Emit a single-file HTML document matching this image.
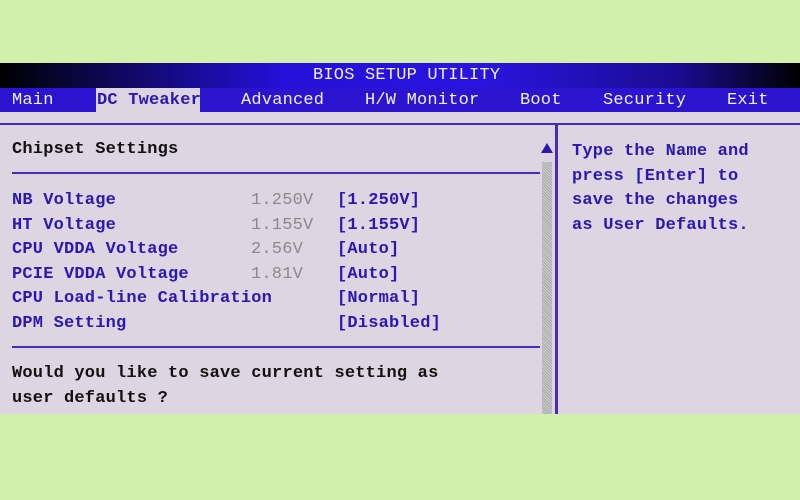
<!DOCTYPE html><html><head><style>
body{margin:0;width:800px;height:500px;background:#d3f0aa;position:relative;overflow:hidden;font-family:"Liberation Mono",monospace;}
.t{position:absolute;font-size:17px;letter-spacing:0.2px;white-space:pre;line-height:20px}
.b{color:#2a18b0;font-weight:bold}
.k{color:#111;font-weight:bold}
.g{color:#8a8a8a}
.w{color:#f0f0ff}
</style></head><body>
<div style="position:absolute;left:0;top:63px;width:800px;height:25px;background:linear-gradient(90deg,#000 0%,#0a0640 10%,#2410d8 35%,#2a14e0 60%,#1a0c90 85%,#000 100%)"></div>
<div class="t w" style="left:313px;top:66px">BIOS SETUP UTILITY</div>
<div style="position:absolute;left:0;top:88px;width:800px;height:24px;background:#2a14d0"></div>
<div style="position:absolute;left:96px;top:88px;width:104px;height:24px;background:#dcd4e0"></div>
<div class="t w" style="left:12px;top:91px">Main</div>
<div class="t b" style="left:97px;top:91px">DC Tweaker</div>
<div class="t w" style="left:241px;top:91px">Advanced</div>
<div class="t w" style="left:365px;top:91px">H/W Monitor</div>
<div class="t w" style="left:520px;top:91px">Boot</div>
<div class="t w" style="left:603px;top:91px">Security</div>
<div class="t w" style="left:727px;top:91px">Exit</div>
<div style="position:absolute;left:0;top:112px;width:800px;height:302px;background:#ddd5e1"></div>
<div style="position:absolute;left:0;top:123px;width:800px;height:2px;background:#4a2ab8"></div>
<div style="position:absolute;left:555px;top:124px;width:3px;height:290px;background:#4a2ab8"></div>
<div style="position:absolute;left:12px;top:172px;width:528px;height:2px;background:#4a2ab8"></div>
<div style="position:absolute;left:12px;top:346px;width:528px;height:2px;background:#4a2ab8"></div>
<div style="position:absolute;left:542px;top:162px;width:10px;height:252px;background:repeating-linear-gradient(45deg,#aaa 0 1px,#ccc 1px 2px)"></div>
<div style="position:absolute;left:541px;top:143px;width:0;height:0;border-left:6px solid transparent;border-right:6px solid transparent;border-bottom:10px solid #2a18b0"></div>
<div class="t k" style="left:12px;top:140px">Chipset Settings</div>
<div class="t b" style="left:12px;top:189px;line-height:24.6px">NB Voltage
HT Voltage
CPU VDDA Voltage
PCIE VDDA Voltage
CPU Load-line Calibration
DPM Setting</div>
<div class="t g" style="left:251px;top:189px;line-height:24.6px">1.250V
1.155V
2.56V
1.81V</div>
<div class="t b" style="left:337px;top:189px;line-height:24.6px">[1.250V]
[1.155V]
[Auto]
[Auto]
[Normal]
[Disabled]</div>
<div class="t k" style="left:12px;top:362px;line-height:24.6px">Would you like to save current setting as
user defaults ?</div>
<div class="t b" style="left:572px;top:140px;line-height:24.6px">Type the Name and
press [Enter] to
save the changes
as User Defaults.</div>
</body></html>
